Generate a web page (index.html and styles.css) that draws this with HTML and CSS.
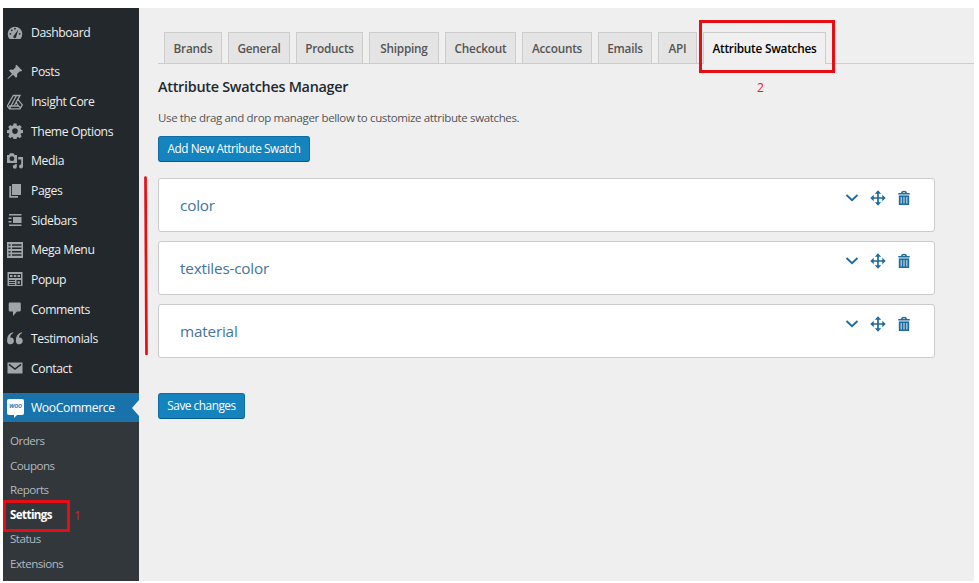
FILE: index.html
```html
<!DOCTYPE html>
<html lang="en">
<head>
<meta charset="utf-8">
<title>Attribute Swatches</title>
<link rel="stylesheet" href="styles.css">
</head>
<body>
<svg class="defs" width="0" height="0" aria-hidden="true">
  <symbol id="chev" viewBox="0 0 16 16"><path d="M2.500 5l5.500 5.300L13.500 5" fill="none" stroke="currentColor" stroke-width="1.900"/></symbol>
  <symbol id="move" viewBox="0 0 16 16"><path d="M8 2v12M2 8h12" stroke="currentColor" stroke-width="1.700"/><path d="M8 .3l3.200 3.400H4.800zM8 15.700l3.200-3.400H4.800zM.3 8l3.400-3.200v6.400zM15.700 8l-3.400-3.200v6.400z" fill="currentColor"/></symbol>
  <symbol id="trash" viewBox="0 0 16 16"><path d="M2.300 3.800h11.400M5.800 3.200q0-1.700 2.200-1.700t2.200 1.700" fill="none" stroke="currentColor" stroke-width="1.500"/><path d="M2.800 5.400h10.400V15H2.800z" fill="currentColor"/><path d="M5.200 7v6.500M8 7v6.500M10.800 7v6.500" stroke="#b9d5e6" stroke-width="1.200"/></symbol>
</svg>
<div class="app">
  <nav class="side">
    <ul class="menu">
      <li class="first"><svg viewBox="0 0 16 16"><path d="M2.600 14A7.300 7.300 0 1 1 13.400 14z" fill="currentColor"/><g fill="#23282d"><circle cx="3.400" cy="8.800" r=".9"/><circle cx="4.800" cy="5.300" r=".9"/><circle cx="8" cy="3.700" r=".9"/><circle cx="12.700" cy="8.800" r=".9"/><path d="M11.500 4.200L9.300 11.300a1.500 1.500 0 1 1-2.200-1z"/></g></svg><span>Dashboard</span></li>
      <li><svg viewBox="0 0 16 16"><path d="M9.500.8l5.700 5.700-1.200 1-1.200-.3-2.700 2.700.2 2.700-1.300 1.200-3-3L1 15l-.6-.5L5 9.700 2 6.700l1.300-1.200 2.800.3L8.800 3l-.4-1.200z" fill="currentColor"/></svg><span>Posts</span></li>
      <li><svg viewBox="0 0 16 16" fill="none" stroke="currentColor" stroke-width="1.300"><path d="M6.300 1.500H13L10.800 5.300l4.500 5.500-2.300 4H2.500L.3 12zM9.500 1.500L2.500 14.800M10.800 5.300L7 12h4.500L9.300 8.500M7 12H2M11.500 12l2 1.800"/></svg><span>Insight Core</span></li>
      <li><svg viewBox="0 0 16 16"><path d="M6.500.6h3l.3 2 1.200.5 1.700-1.200 2 2-1.200 1.800.5 1.100 2 .4v2.700l-2 .4-.5 1.200 1.200 1.800-2 2-1.700-1.200-1.200.5-.3 2h-3l-.4-2-1.200-.5-1.700 1.200-2-2 1.200-1.800-.5-1.200-2-.4V7.200l2-.4.500-1.100L1.200 3.900l2-2L4.900 3.100l1.200-.5zM8 5.300a2.800 2.800 0 1 0 0 5.600 2.800 2.800 0 0 0 0-5.600z" fill="currentColor" fill-rule="evenodd"/></svg><span>Theme Options</span></li>
      <li><svg viewBox="0 0 16 16"><path d="M0 2h2l1-1.800h3.500l1 1.800H10v8H0zM4.900 3.300a2.400 2.400 0 1 0 0 4.800 2.400 2.400 0 0 0 0-4.800z" fill="currentColor" fill-rule="evenodd"/><path d="M11.200 4H16v9.500a2 2 0 1 1-1.800-2V6.500h-3z" fill="currentColor"/><path d="M9.800 11v2.800a2 2 0 1 1-1.600-2V11z" fill="currentColor"/></svg><span>Media</span></li>
      <li><svg viewBox="0 0 16 16"><path d="M5 1h9v11H5z" fill="currentColor"/><path d="M3.200 3v10.800H11" fill="none" stroke="currentColor" stroke-width="1.800"/></svg><span>Pages</span></li>
      <li><svg viewBox="0 0 16 16"><path d="M2 2h12.500v1.500H2zM2 12.500h12.500V14H2zM6 5h8.500v6H6zM1.500 5.500h3V7h-3zM1.500 9h3v1.500h-3z" fill="currentColor"/></svg><span>Sidebars</span></li>
      <li><svg viewBox="0 0 16 16"><path d="M0 0h16v16H0z" fill="currentColor"/><path d="M1.500 3h2M5 3h9.500M1.500 6.300h2M5 6.300h9.500M1.500 9.700h2M5 9.700h9.500M1.500 13h2M5 13h9.500" stroke="#23282d" stroke-width="1.500"/></svg><span>Mega Menu</span></li>
      <li><svg viewBox="0 0 16 16"><path d="M.5 1h15v14H.5z" fill="currentColor"/><path d="M2 3h12v4H2zM2 9h6v1H2zM2 11h6v1H2zM2 13h6v1H2zM9.500 9H14v5H9.500z" fill="#23282d"/><path d="M3 4h2.500v2H3zM6.800 4h2.500v2H6.800zM10.500 4H13v2h-2.500zM10.700 10.300h2v2.400h-2z" fill="currentColor"/></svg><span>Popup</span></li>
      <li><svg viewBox="0 0 16 16"><path d="M3 1.500h9.500q1.300 0 1.300 1.300v6.400q0 1.300-1.300 1.300H10L6 15v-4.500H3q-1.300 0-1.300-1.300V2.800Q1.700 1.500 3 1.500z" fill="currentColor"/></svg><span>Comments</span></li>
      <li><svg viewBox="0 0 16 16"><path d="M6.500 2Q3.500 3.200 3.200 6.500a3.400 3.400 0 1 1-3.100 3.700Q-.5 3 6 1.200z" fill="currentColor"/><path d="M15.300 2q-3 1.200-3.300 4.500a3.400 3.400 0 1 1-3.100 3.700Q8.300 3 14.800 1.200z" fill="currentColor"/></svg><span>Testimonials</span></li>
      <li><svg viewBox="0 0 16 16"><path d="M.5 2.500h15v11H.5z" fill="currentColor"/><path d="M2 4.300l6 4.700 6-4.700" fill="none" stroke="#23282d" stroke-width="1.500"/></svg><span>Contact</span></li>
      <li class="current"><span class="woo">woo</span><span>WooCommerce</span></li>
    </ul>
    <ul class="sub">
      <li>Orders</li><li>Coupons</li><li>Reports</li>
      <li class="on">Settings<span class="mark one"></span><span class="num n1">1</span></li>
      <li>Status</li><li>Extensions</li>
    </ul>
  </nav>
  <main class="main">
    <div class="tabs">
      <a>Brands</a><a>General</a><a>Products</a><a>Shipping</a><a>Checkout</a><a>Accounts</a><a>Emails</a><a>API</a>
      <a class="active">Attribute Swatches<span class="mark two"></span><span class="num n2">2</span></a>
    </div>
    <h1>Attribute Swatches Manager</h1>
    <p>Use the drag and drop manager bellow to customize attribute swatches.</p>
    <button class="btn add">Add New Attribute Swatch</button>
    <div class="cards">
      <svg class="stroke" viewBox="0 0 6 182"><path d="M2.500 2.500L3.500 179" stroke="#e60d14" stroke-width="2.700" stroke-linecap="round"/></svg>
      <div class="card"><span>color</span><div class="acts"><svg><use href="#chev"/></svg><svg><use href="#move"/></svg><svg><use href="#trash"/></svg></div></div>
      <div class="card"><span>textiles-color</span><div class="acts"><svg><use href="#chev"/></svg><svg><use href="#move"/></svg><svg><use href="#trash"/></svg></div></div>
      <div class="card"><span>material</span><div class="acts"><svg><use href="#chev"/></svg><svg><use href="#move"/></svg><svg><use href="#trash"/></svg></div></div>
    </div>
    <button class="btn save">Save changes</button>
  </main>
</div>
</body>
</html>
```
FILE: styles.css
```css
* { box-sizing: border-box; }
body { margin: 0; padding: 8px 5px 2px 3px; height: 583px; background: #fff; font-family: "Open Sans", "Noto Sans", sans-serif; overflow: hidden; }
ul { list-style: none; margin: 0; padding: 0; }
.defs { position: absolute; }
.app { display: flex; height: 573px; background: #efefef; }
.side { width: 136px; background: #32373c; flex: none; }
.menu { background: #23282d; padding-top: 10px; }
.menu li { display: flex; align-items: center; height: 29.65px; padding-left: 4px; color: #eee; font-size: 12.2px; letter-spacing: -.4px; }
.menu li.first { margin-bottom: 9.5px; }
.menu li svg { width: 16px; height: 16px; margin-right: 8px; color: #a0a5aa; }
.menu li.current { margin-top: 9.6px; background: #1a72aa; color: #fff; position: relative; }
.menu li.current::after { content: ""; position: absolute; right: 0; top: 7px; border: solid transparent; border-width: 8px 7px 8px 0; border-right-color: #efefef; }
.menu .woo { position: relative; width: 17px; height: 16px; margin: -1px 7px 0 0; border-radius: 2px; background: #fff; color: #1a72aa; font-size: 7px; font-weight: 600; font-style: italic; line-height: 14px; text-align: center; letter-spacing: -.2px; }
.woo::after { content: ""; position: absolute; left: 7px; top: 16px; border: solid transparent; border-width: 3px 3px 0 0; border-top-color: #fff; }
.sub { padding-top: 6.9px; }
.sub li { position: relative; height: 24.450px; line-height: 24.450px; padding-left: 7px; color: #b4b9be; font-size: 11.6px; letter-spacing: -.5px; }
.sub .on { color: #fff; font-weight: 700; letter-spacing: -.6px; }
.mark { position: absolute; border: 3px solid #e60d14; }
.mark.one { left: 0; top: -3px; width: 67px; height: 32px; }
.num { position: absolute; color: #d9232c; font-weight: 400; font-size: 12px; line-height: 16px; }
.n1 { left: 71px; top: 5px; }
.main { flex: 1; padding: 24px 0 0 19px; }
.tabs { display: grid; grid-template-columns: 58px 62px 67px 70px 71px 70px 54px 39px 123px; gap: 6px; height: 32px; padding-left: 6px; border-bottom: 1px solid #ccc; }
.tabs a { height: 31px; border: 1px solid #ccc; border-bottom: 0; background: #e4e4e4; color: #555; font-size: 11.8px; font-weight: 600; line-height: 31px; text-align: center; white-space: nowrap; letter-spacing: -.24px; }
.tabs .active { position: relative; height: 32px; background: #f0f0f0; color: #000; }
.mark.two { left: -5px; top: -13px; width: 136px; height: 53px; }
.n2 { left: 53px; top: 47px; }
h1 { margin: 12px 0 0; height: 22px; line-height: 22px; font-size: 14.4px; font-weight: 600; color: #23282d; letter-spacing: -.28px; }
p { margin: 11px 0 0; height: 18px; line-height: 17px; font-size: 11.5px; color: #555; letter-spacing: -.36px; }
.btn { display: block; height: 26px; padding: 0 0 2px; border: 1px solid #0f6da3; border-bottom-color: #005a87; border-radius: 3px; background: #1583bd; color: #fff; font: 11.8px/22px "Open Sans", sans-serif; letter-spacing: -.46px; white-space: nowrap; }
.add { width: 152px; margin-top: 9px; }
.save { width: 87px; margin-top: 35px; }
.cards { position: relative; display: flex; flex-direction: column; gap: 9px; width: 777px; margin-top: 16px; }
.stroke { position: absolute; left: -15px; top: -3px; width: 6px; height: 182px; }
.card { display: flex; justify-content: space-between; height: 54px; padding: 0 22px 0 21px; border: 1px solid #ccc; border-radius: 3px; background: #fff; color: #45749a; font-size: 15.3px; letter-spacing: -.2px; line-height: 52px; }
.acts { display: flex; gap: 10px; padding-top: 11px; color: #1f6b9d; }
.acts svg { width: 16px; height: 16px; }
```
